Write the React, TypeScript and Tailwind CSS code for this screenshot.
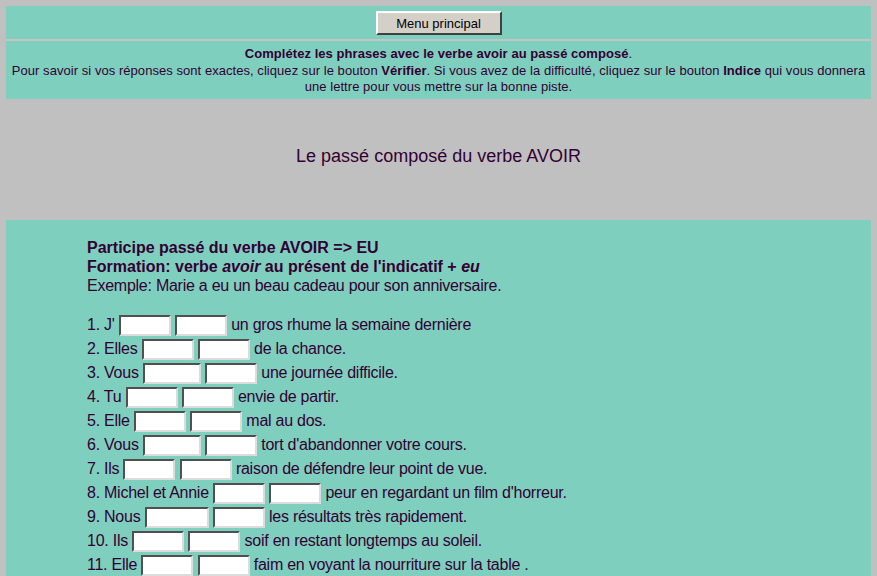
import React from "react";

const TEAL = "bg-[#7fcfbf]";

type Item = { n: number; subj: string; w1: number; w2: number; rest: string };

const items: Item[] = [
  { n: 1, subj: "J'", w1: 52, w2: 52, rest: "un gros rhume la semaine dernière" },
  { n: 2, subj: "Elles", w1: 52, w2: 52, rest: "de la chance." },
  { n: 3, subj: "Vous", w1: 58, w2: 52, rest: "une journée difficile." },
  { n: 4, subj: "Tu", w1: 52, w2: 52, rest: "envie de partir." },
  { n: 5, subj: "Elle", w1: 52, w2: 52, rest: "mal au dos." },
  { n: 6, subj: "Vous", w1: 58, w2: 52, rest: "tort d'abandonner votre cours." },
  { n: 7, subj: "Ils", w1: 52, w2: 52, rest: "raison de défendre leur point de vue." },
  { n: 8, subj: "Michel et Annie", w1: 52, w2: 52, rest: "peur en regardant un film d'horreur." },
  { n: 9, subj: "Nous", w1: 64, w2: 52, rest: "les résultats très rapidement." },
  { n: 10, subj: "Ils", w1: 52, w2: 52, rest: "soif en restant longtemps au soleil." },
  { n: 11, subj: "Elle", w1: 52, w2: 52, rest: "faim en voyant la nourriture sur la table ." },
];

function Box({ w }: { w: number }) {
  return (
    <input
      type="text"
      style={{ width: w }}
      className="inline-block h-[21px] align-middle bg-white border-2 border-t-[#505050] border-l-[#505050] border-b-[#dcdcdc] border-r-[#dcdcdc] outline-none"
    />
  );
}

export default function App() {
  return (
    <div className="min-h-[576px] bg-[#c0c0c0] pt-[6px] px-[6px] text-[#330033] overflow-hidden">
      <div className={TEAL}>
        <div className="flex justify-center pt-[5px] pb-[4px]">
          <button
            className="w-[126px] h-[24px] bg-[#d4d0c8] border-2 border-t-white border-l-white border-b-[#404040] border-r-[#404040] text-[13px] text-black leading-none"
            style={{ fontFamily: '"Liberation Sans", Arial, sans-serif' }}
          >
            Menu principal
          </button>
        </div>
        <div className="h-[2px] bg-[#c4c4c4]" />
        <div
          className="text-center text-[13px] leading-[16.5px] pt-[5px] pb-[3.5px] px-[1px] tracking-[0.05px]"
          style={{ fontFamily: '"Liberation Sans", Arial, sans-serif' }}
        >
          <b>Complétez les phrases avec le verbe avoir au passé composé</b>.<br />
          Pour savoir si vos réponses sont exactes, cliquez sur le bouton <b>Vérifier</b>. Si vous avez de la difficulté, cliquez sur le bouton <b>Indice</b> qui vous donnera une lettre pour vous mettre sur la bonne piste.
        </div>
      </div>

      <div
        className="h-[121px] flex justify-center items-start pt-[44px] text-[18px]"
        style={{ fontFamily: '"Liberation Sans", Arial, sans-serif' }}
      >
        Le passé composé du verbe AVOIR
      </div>

      <div
        className={`${TEAL} pl-[81px] pt-[18px] pb-[20px] text-[16px]`}
        style={{ fontFamily: '"Liberation Sans", Arial, sans-serif' }}
      >
        <div className="leading-[19px]">
          <b>Participe passé du verbe AVOIR =&gt; EU</b>
          <br />
          <b>
            Formation: verbe <i>avoir</i> au présent de l'indicatif + <i>eu</i>
          </b>
          <br />
          <span className="tracking-[-0.25px]">Exemple: Marie a eu un beau cadeau pour son anniversaire.</span>
        </div>
        <div className="h-[18px]" />
        <div className="tracking-[-0.25px]">
          {items.map((it) => (
            <div key={it.n} className="h-[24px] flex items-center whitespace-pre">
              <span>{`${it.n}. ${it.subj} `}</span>
              <Box w={it.w1} />
              <span> </span>
              <Box w={it.w2} />
              <span>{` ${it.rest}`}</span>
            </div>
          ))}
        </div>
      </div>
    </div>
  );
}
